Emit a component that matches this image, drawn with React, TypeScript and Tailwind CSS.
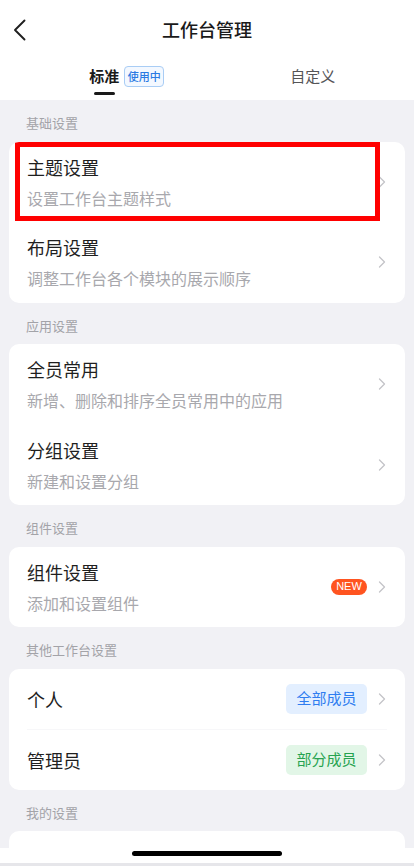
import React from "react";

const FONT = { fontFamily: '"Noto Sans CJK SC", "Noto Sans", sans-serif' };

function Chevron() {
  return (
    <svg width="8" height="12" viewBox="0 0 8 12" fill="none" className="shrink-0">
      <path d="M1.5 1L6.5 6L1.5 11" stroke="#c4c4c8" strokeWidth="1.3" strokeLinecap="round" strokeLinejoin="round" />
    </svg>
  );
}

function SectionLabel({ text }: { text: string }) {
  return (
    <div className="h-[41.5px] px-[26px] pt-[14px] text-[13px] leading-[18px] text-[#a3a3a8]">{text}</div>
  );
}

function TwoLineRow({
  title,
  desc,
  right,
  highlight,
}: {
  title: string;
  desc: string;
  right?: React.ReactNode;
  highlight?: boolean;
}) {
  return (
    <div className="relative flex h-[80.5px] items-center pl-[18px] pr-[19px]">
      <div className="flex flex-1 flex-col">
        <div className="text-[18px] leading-[24px] text-[#1f1f1f]">{title}</div>
        <div className="mt-[8px] text-[16px] leading-[22px] text-[#a8a8ad]">{desc}</div>
      </div>
      <div className="flex items-center gap-[11px]">
        {right}
        <Chevron />
      </div>
      {highlight && (
        <div className="absolute left-[6px] top-0 h-[79px] w-[365px] border-[5px] border-[#ff0000]" />
      )}
    </div>
  );
}

function OneLineRow({ title, badge }: { title: string; badge: React.ReactNode }) {
  return (
    <div className="flex h-[60px] items-center pl-[18px] pr-[19px]">
      <div className="flex-1 text-[18px] leading-[24px] text-[#1f1f1f]">{title}</div>
      <div className="flex items-center gap-[11px]">
        {badge}
        <Chevron />
      </div>
    </div>
  );
}

function Card({ children }: { children: React.ReactNode }) {
  return <div className="mx-[9px] overflow-hidden rounded-[10px] bg-white">{children}</div>;
}

export default function App() {
  return (
    <div className="flex h-[866px] w-[414px] flex-col overflow-hidden bg-white" style={FONT}>
      {/* header */}
      <div className="relative flex h-[58px] items-center justify-center">
        <svg
          width="14"
          height="22"
          viewBox="0 0 14 22"
          fill="none"
          className="absolute left-[13px] top-[19px]"
        >
          <path d="M11.5 1.5L2 11L11.5 20.5" stroke="#1f1f1f" strokeWidth="1.9" strokeLinecap="round" strokeLinejoin="round" />
        </svg>
        <div className="text-[18px] font-medium leading-[24px] text-[#1a1a1a]">工作台管理</div>
      </div>

      {/* tabs */}
      <div className="flex h-[42px]">
        <div className="flex flex-1 justify-center pl-[3px]">
          <div className="relative flex flex-col items-center">
            <div className="pt-[7px] text-[15px] font-bold leading-[22px] text-[#1a1a1a]">标准</div>
            <div className="mt-[5px] h-[3px] w-[21px] rounded-full bg-[#1a1a1a]" />
            <div className="absolute left-[35px] top-[8px] flex h-[21px] w-[40px] items-center justify-center rounded-[4px] border border-[#a9cdf5] bg-[#f3f8ff] text-[11px] font-medium leading-none text-[#2a7ae2]">
              使用中
            </div>
          </div>
        </div>
        <div className="flex flex-1 justify-center pl-[6px]">
          <div className="pt-[7px] text-[15px] leading-[22px] text-[#555558]">自定义</div>
        </div>
      </div>

      {/* content */}
      <div className="flex-1 overflow-hidden bg-[#f1f1f5]">
        <SectionLabel text="基础设置" />
        <Card>
          <TwoLineRow title="主题设置" desc="设置工作台主题样式" highlight />
          <TwoLineRow title="布局设置" desc="调整工作台各个模块的展示顺序" />
        </Card>

        <SectionLabel text="应用设置" />
        <Card>
          <TwoLineRow title="全员常用" desc="新增、删除和排序全员常用中的应用" />
          <TwoLineRow title="分组设置" desc="新建和设置分组" />
        </Card>

        <SectionLabel text="组件设置" />
        <Card>
          <TwoLineRow
            title="组件设置"
            desc="添加和设置组件"
            right={
              <span className="flex h-[16px] w-[36px] items-center justify-center rounded-full bg-[#ff5420] text-[11px] leading-none text-white" style={{ fontFamily: '"Liberation Sans", Arial, sans-serif' }}>
                NEW
              </span>
            }
          />
        </Card>

        <SectionLabel text="其他工作台设置" />
        <Card>
          <OneLineRow
            title="个人"
            badge={
              <span className="flex h-[30px] w-[81px] items-center justify-center rounded-[5px] bg-[#e3efff] text-[15px] text-[#2f7df0]">
                全部成员
              </span>
            }
          />
          <div className="mx-[18px] h-px bg-[#f7f7f9]" />
          <OneLineRow
            title="管理员"
            badge={
              <span className="flex h-[30px] w-[81px] items-center justify-center rounded-[5px] bg-[#e2f6e7] text-[15px] text-[#27a350]">
                部分成员
              </span>
            }
          />
        </Card>

        <SectionLabel text="我的设置" />
        <Card>
          <TwoLineRow title="我的设置" desc="个人工作台设置" />
        </Card>
      </div>

      {/* home indicator bar */}
      <div className="flex h-[18px] justify-center border-b-[3px] border-[#e6e6ea] bg-white pt-[3px]">
        <div className="h-[5px] w-[150px] rounded-full bg-black" />
      </div>
    </div>
  );
}
